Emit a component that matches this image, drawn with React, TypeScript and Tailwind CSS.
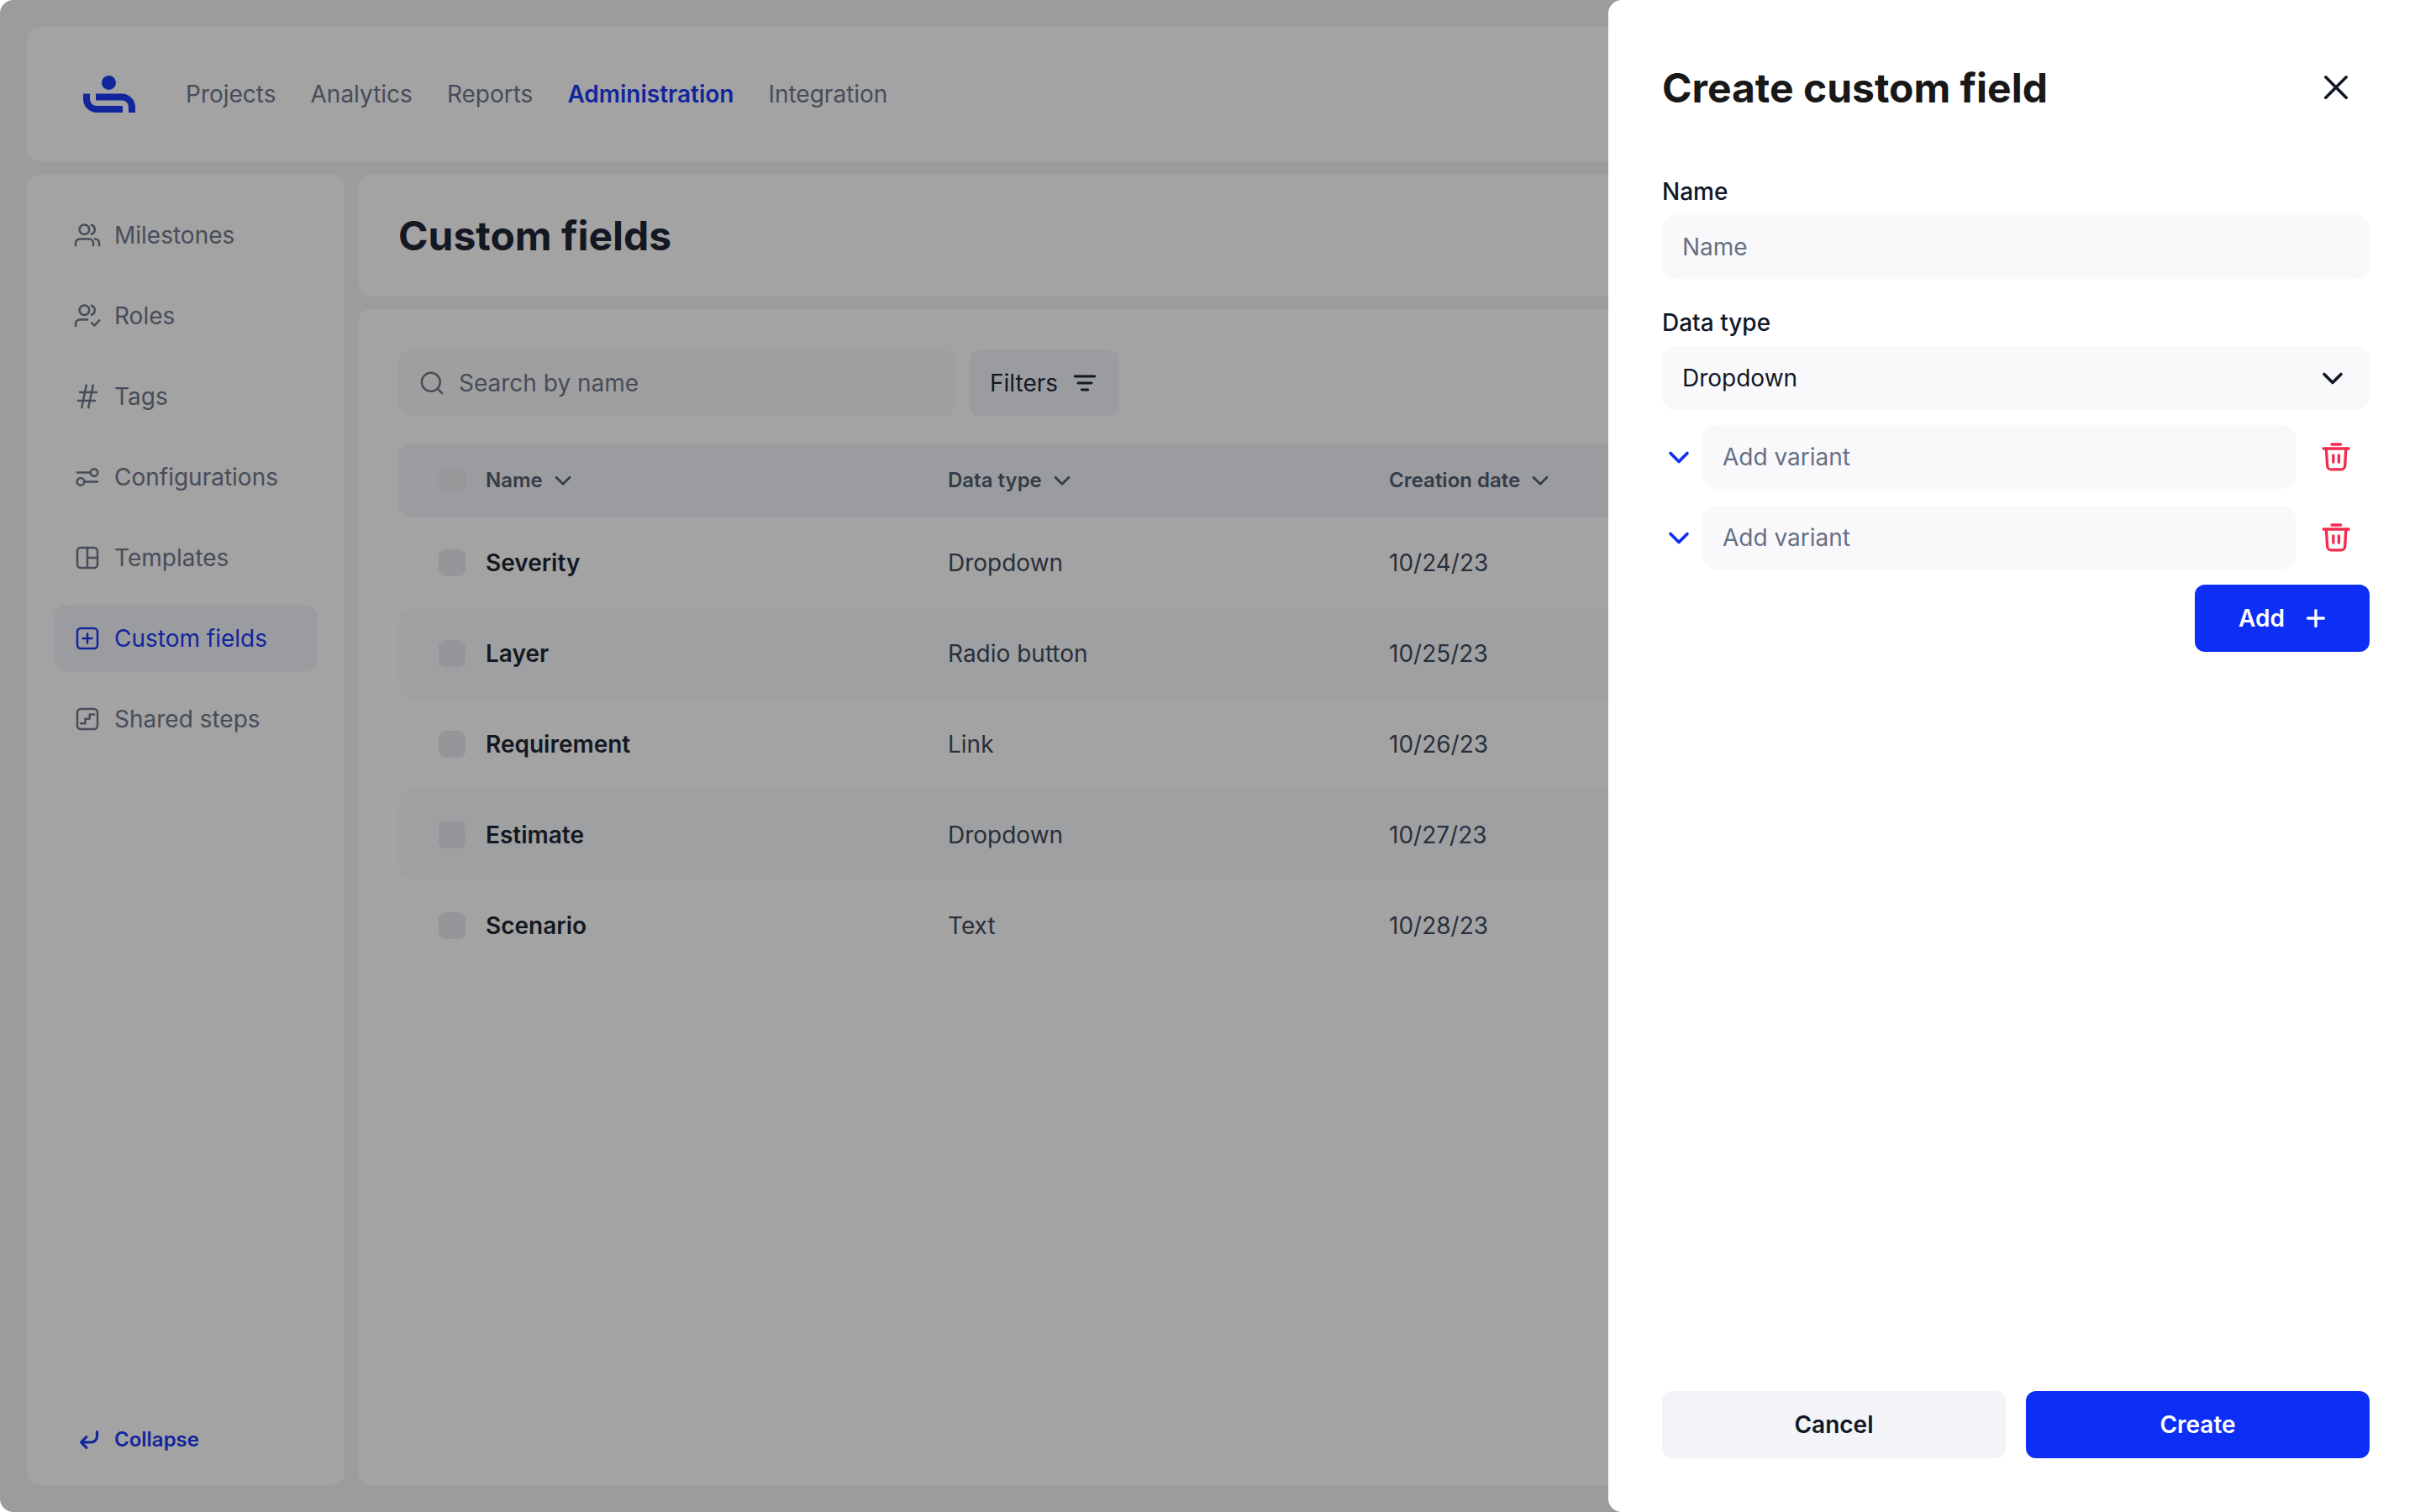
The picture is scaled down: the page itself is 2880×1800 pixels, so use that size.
import React from "react";
import type { ReactNode } from "react";

function Icon({
  size = 32,
  stroke = 2,
  className = "",
  children,
}: {
  size?: number;
  stroke?: number;
  className?: string;
  children: ReactNode;
}) {
  return (
    <svg
      width={size}
      height={size}
      viewBox={`0 0 ${size} ${size}`}
      fill="none"
      stroke="currentColor"
      strokeWidth={stroke}
      strokeLinecap="round"
      strokeLinejoin="round"
      aria-hidden="true"
      className={`shrink-0 ${className}`}
    >
      {children}
    </svg>
  );
}

const Logo = () => (
  <svg width="62" height="44" viewBox="0 0 62 44" fill="none" aria-hidden="true" className="text-[#0d2ef5]">
    <circle cx="30.5" cy="8.5" r="8.5" fill="currentColor" />
    <path d="M4 21.5V28a12 12 0 0 0 12 12H47" stroke="currentColor" strokeWidth="8" />
    <path d="M15 25.5H46a12 12 0 0 1 12 12V44" stroke="currentColor" strokeWidth="8" />
  </svg>
);

const ChevronSmall = () => (
  <Icon stroke={2.7}>
    <path d="M8 12.3l8 8 8-8" />
  </Icon>
);

const ChevronLarge = ({ className = "" }: { className?: string }) => (
  <Icon size={40} stroke={3.6} className={className}>
    <path d="M10 15.5l10 10 10-10" />
  </Icon>
);

const people = (
  <>
    <circle cx="12.4" cy="9.3" r="5.8" />
    <path d="M20.8 3.8a5.8 5.8 0 0 1 0 11" />
  </>
);

const menu: { label: string; icon: ReactNode }[] = [
  {
    label: "Milestones",
    icon: (
      <>
        {people}
        <path d="M2 28.3v-2.8a5 5 0 0 1 5-5h11a5 5 0 0 1 5 5v2.8" />
        <path d="M25.2 20.5a5 5 0 0 1 4.8 5v2.8" />
      </>
    ),
  },
  {
    label: "Roles",
    icon: (
      <>
        {people}
        <path d="M2 28.3v-2.8a5 5 0 0 1 5-5h9" />
        <path d="M21 24.4l3.4 3.2 5.8-6.2" />
      </>
    ),
  },
  {
    label: "Tags",
    icon: <path d="M14.7 2.8L9.3 29.2M22.7 2.8l-5.4 26.4M7 11h20M5 21h20" />,
  },
  {
    label: "Configurations",
    icon: (
      <>
        <path d="M4 10.6h15.4M12.7 21.4H28" />
        <circle cx="24" cy="10.6" r="4.3" />
        <circle cx="8" cy="21.4" r="4.3" />
      </>
    ),
  },
  {
    label: "Templates",
    icon: (
      <>
        <rect x="4" y="4" width="24" height="24" rx="4" />
        <path d="M16 4v24M16 16h12" />
      </>
    ),
  },
  {
    label: "Custom fields",
    icon: (
      <>
        <rect x="4" y="4" width="24" height="24" rx="4" />
        <path d="M16 10.5v11M10.5 16h11" />
      </>
    ),
  },
  {
    label: "Shared steps",
    icon: (
      <>
        <rect x="4" y="4" width="24" height="24" rx="4" />
        <path d="M8 21.2h5.4v-5.4h5.3v-5.3h5.4" />
      </>
    ),
  },
];

const sections = ["Projects", "Analytics", "Reports", "Administration", "Integration"];

const fields = [
  { name: "Severity", type: "Dropdown", date: "10/24/23" },
  { name: "Layer", type: "Radio button", date: "10/25/23" },
  { name: "Requirement", type: "Link", date: "10/26/23" },
  { name: "Estimate", type: "Dropdown", date: "10/27/23" },
  { name: "Scenario", type: "Text", date: "10/28/23" },
];

function TopBar() {
  return (
    <header className="flex h-40 items-center gap-15 rounded-2xl bg-white px-[67px]">
      <a href="#home" aria-label="Home">
        <Logo />
      </a>
      <nav aria-label="Sections" className="flex items-center gap-[41px]">
        {sections.map((s) => (
          <a
            key={s}
            href="#section"
            aria-current={s === "Administration" ? "page" : undefined}
            className={s === "Administration" ? "font-semibold text-[#0d2ef5]" : "text-[#667085]"}
          >
            {s}
          </a>
        ))}
      </nav>
    </header>
  );
}

function Sidebar() {
  return (
    <aside className="flex w-[378px] shrink-0 flex-col justify-between rounded-2xl bg-white p-8">
      <nav aria-label="Administration" className="flex flex-col gap-4">
        {menu.map(({ label, icon }) => {
          const active = label === "Custom fields";
          return (
            <a
              key={label}
              href="#item"
              aria-current={active ? "page" : undefined}
              className={`flex h-20 items-center gap-4 rounded-2xl px-6 ${
                active ? "bg-[#f2f4f9] text-[#0d2ef5]" : "text-[#667085]"
              }`}
            >
              <Icon stroke={2.5}>{icon}</Icon>
              {label}
            </a>
          );
        })}
      </nav>
      <button type="button" className="flex h-11 items-center gap-4 px-6 text-[24px] font-semibold text-[#0d2ef5]">
        <Icon stroke={3.2}>
          <path d="M27.5 6.7V12a7 7 0 0 1-7 7H8.6M14.8 12.6L8.6 19l6.2 6.4" />
        </Icon>
        Collapse
      </button>
    </aside>
  );
}

function CheckBox({ label, className }: { label: string; className: string }) {
  return (
    <input
      type="checkbox"
      aria-label={label}
      className={`block size-8 appearance-none rounded-lg ${className}`}
    />
  );
}

function FieldsTable() {
  return (
    <table className="w-full table-fixed border-separate border-spacing-0 text-left">
      <colgroup>
        <col className="w-[104px]" />
        <col className="w-[550px]" />
        <col className="w-[525px]" />
        <col />
      </colgroup>
      <thead>
        <tr className="h-[88px] bg-[#f2f4f9] text-[24px] text-[#475467]">
          <th className="rounded-l-2xl pl-12">
            <CheckBox label="Select all" className="bg-[#ebedf1]" />
          </th>
          {["Name", "Data type", "Creation date"].map((h) => (
            <th key={h} className="font-semibold last:rounded-r-2xl">
              <button type="button" className="flex items-center gap-2">
                {h}
                <ChevronSmall />
              </button>
            </th>
          ))}
        </tr>
      </thead>
      <tbody>
        {fields.map((f) => (
          <tr key={f.name} className="h-[108px] text-[#344054] even:bg-[#f9fbfc]">
            <td className="rounded-l-2xl pl-12">
              <CheckBox label={`Select ${f.name}`} className="bg-[#e8eaf0]" />
            </td>
            <td className="font-semibold text-[#101828]">{f.name}</td>
            <td>{f.type}</td>
            <td className="rounded-r-2xl">{f.date}</td>
          </tr>
        ))}
      </tbody>
    </table>
  );
}

const inputStyle =
  "h-[76px] w-full rounded-2xl bg-[#f9f9fb] px-6 text-[#101828] placeholder:text-[#667085] outline-none";

function VariantRow({ index }: { index: number }) {
  return (
    <li className="flex h-20 items-center gap-2">
      <button type="button" aria-label={`Move variant ${index} down`} className="text-[#0d2ef5]">
        <ChevronLarge />
      </button>
      <input type="text" aria-label={`Variant ${index}`} placeholder="Add variant" className={inputStyle} />
      <button
        type="button"
        aria-label={`Delete variant ${index}`}
        className="flex size-20 shrink-0 items-center justify-center text-[#f5294e]"
      >
        <Icon size={40} stroke={3.3}>
          <path d="M15 5h10.6M5.2 10h30" />
          <path d="M8.4 10.5L9.7 30.5a4.6 4.6 0 0 0 4.6 4.4h11.8a4.6 4.6 0 0 0 4.6-4.4L31.8 10.5" />
          <path d="M16.8 17.8v8.4M23.4 17.8v8.4" />
        </Icon>
      </button>
    </li>
  );
}

function CreateDrawer() {
  return (
    <form
      role="dialog"
      aria-labelledby="drawer-title"
      className="fixed inset-y-0 right-0 flex w-[966px] max-w-full flex-col rounded-l-2xl bg-white py-16 pr-15 pl-16"
    >
      <div className="flex h-20 items-center justify-between">
        <h2 id="drawer-title" className="text-[48px] leading-[59px] font-bold text-[#181818]">
          Create custom field
        </h2>
        <button type="button" aria-label="Close" className="flex size-20 items-center justify-center text-[#101828]">
          <Icon size={40} stroke={3.6}>
            <path d="M7.8 7.8l24.4 24.4M32.2 7.8L7.8 32.2" />
          </Icon>
        </button>
      </div>

      <div className="mt-16 flex flex-col gap-8">
        <div className="flex flex-col gap-2">
          <label htmlFor="field-name" className="font-medium">
            Name
          </label>
          <input id="field-name" type="text" placeholder="Name" className={inputStyle} />
        </div>
        <div className="flex flex-col gap-2">
          <label htmlFor="field-type" className="font-medium">
            Data type
          </label>
          <div className="relative flex items-center">
            <select id="field-type" defaultValue="Dropdown" className={`${inputStyle} appearance-none`}>
              <option>Dropdown</option>
              <option>Radio button</option>
              <option>Link</option>
              <option>Text</option>
            </select>
            <ChevronLarge className="pointer-events-none absolute right-6" />
          </div>
        </div>
      </div>

      <ul className="mt-4 flex flex-col gap-4">
        <VariantRow index={1} />
        <VariantRow index={2} />
      </ul>
      <button
        type="button"
        className="mt-4 flex h-20 w-52 items-center justify-between self-end rounded-xl bg-[#0d2ef5] pr-12 pl-[52px] font-semibold text-white"
      >
        Add
        <Icon stroke={3.4}>
          <path d="M16 6.6v18.8M6.6 16h18.8" />
        </Icon>
      </button>

      <div className="mt-auto flex gap-6 font-semibold">
        <button type="button" className="h-20 flex-1 rounded-xl bg-[#f2f4f8]">
          Cancel
        </button>
        <button type="submit" className="h-20 flex-1 rounded-xl bg-[#0d2ef5] text-white">
          Create
        </button>
      </div>
    </form>
  );
}

export default function App() {
  return (
    <div className="bg-white font-['Inter',sans-serif] text-[28px] leading-10 text-[#101828]">
      <div className="flex min-h-screen flex-col gap-4 rounded-2xl bg-[#f2f4f6] p-8">
        <TopBar />
        <div className="flex flex-1 gap-4">
          <Sidebar />
          <main className="flex min-w-0 flex-1 flex-col gap-4">
            <div className="flex h-36 items-center rounded-2xl bg-white px-12">
              <h1 className="text-[48px] leading-[59px] font-bold">Custom fields</h1>
            </div>
            <section className="flex flex-1 flex-col gap-8 rounded-2xl bg-white p-12">
              <div className="flex gap-4">
                <label className="flex h-20 w-[664px] items-center gap-4 rounded-2xl bg-[#f9f9fb] px-6 text-[#667085]">
                  <Icon stroke={2.5}>
                    <circle cx="14.8" cy="14.8" r="11" />
                    <path d="M22.8 22.8l5.4 5.4" />
                  </Icon>
                  <input
                    type="search"
                    aria-label="Search by name"
                    placeholder="Search by name"
                    className="min-w-0 flex-1 bg-transparent outline-none placeholder:text-[#667085]"
                  />
                </label>
                <button type="button" className="flex h-20 items-center gap-4 rounded-xl bg-[#f2f4f9] px-6">
                  Filters
                  <Icon stroke={2.8}>
                    <path d="M4.2 8h23.6M8 16h16M12.3 24h7.4" />
                  </Icon>
                </button>
              </div>
              <FieldsTable />
            </section>
          </main>
        </div>
      </div>
      <div className="fixed inset-0 rounded-2xl bg-[rgba(24,24,24,0.4)]" />
      <CreateDrawer />
    </div>
  );
}
